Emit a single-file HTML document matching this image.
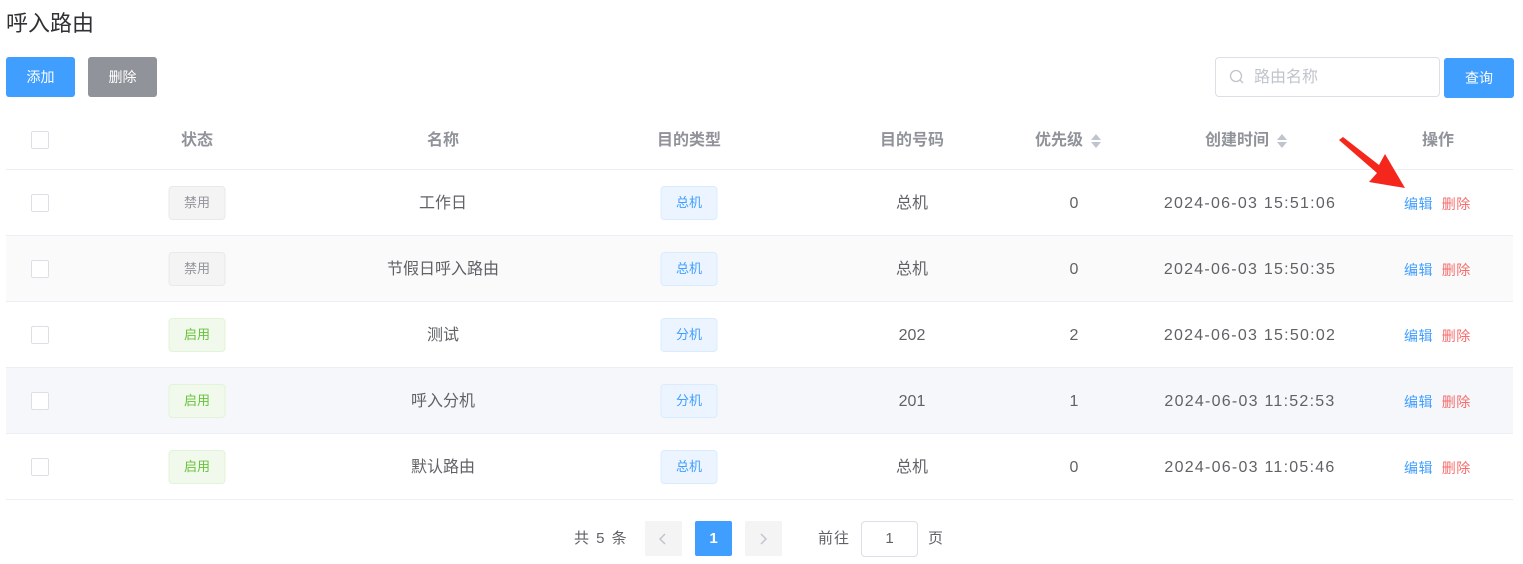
<!DOCTYPE html>
<html><head><meta charset="utf-8"><style>
*{margin:0;padding:0;box-sizing:border-box}
body{width:1523px;height:564px;background:#fff;font-family:"Liberation Sans","Noto Sans CJK SC",sans-serif;position:relative;overflow:hidden;color:#606266}
.a{position:absolute}
.btn{position:absolute;color:#fff;font-size:14px;border-radius:3px;text-align:center;line-height:40px;height:40px}
.row{position:absolute;left:6px;width:1507px;height:66px;border-bottom:1px solid #ebeef5}
.c{position:absolute;top:1px;height:66px;line-height:66px;font-size:16px;color:#606266;text-align:center;transform:translateX(-50%);white-space:nowrap}
.d{letter-spacing:1.25px}
.cb{position:absolute;left:25px;top:24px;width:18px;height:18px;border:1px solid #dcdfe6;border-radius:2px;background:#fff}
.tag{position:absolute;top:16px;height:34px;line-height:32px;width:57px;font-size:13px;text-align:center;border-radius:4px;border:1px solid;transform:translateX(-50%)}
.off{background:#f4f4f5;border-color:#e9e9eb;color:#909399}
.on{background:#f0f9eb;border-color:#e1f3d8;color:#67c23a}
.bl{background:#ecf5ff;border-color:#d9ecff;color:#409eff}
.h{position:absolute;top:111px;height:60px;line-height:60px;font-size:16px;font-weight:bold;color:#909399;transform:translateX(-50%);white-space:nowrap}
.ops{position:absolute;left:1398px;top:1px;line-height:66px;font-size:14px;letter-spacing:0.5px}
.sort{display:inline-block;vertical-align:middle;margin-left:8px;width:10px;height:16px;position:relative}
.sort:before{content:"";position:absolute;top:1px;left:0;border:5px solid transparent;border-bottom:6px solid #c0c4cc;border-top:0}
.sort:after{content:"";position:absolute;bottom:1px;left:0;border:5px solid transparent;border-top:6px solid #c0c4cc;border-bottom:0}
</style></head><body>
<div class="a" style="left:6px;top:8px;font-size:22px;color:#303133;line-height:32px">呼入路由</div>
<div class="btn" style="left:6px;top:57px;width:69px;background:#409eff">添加</div>
<div class="btn" style="left:88px;top:57px;width:69px;background:#909399">删除</div>
<div class="a" style="left:1215px;top:57px;width:225px;height:40px;border:1px solid #dcdfe6;border-radius:4px">
<svg class="a" style="left:13px;top:11px" width="16" height="16" viewBox="0 0 16 16"><circle cx="7" cy="7" r="5.5" fill="none" stroke="#c0c4cc" stroke-width="1.3"/><path d="M11 11l3 3" stroke="#c0c4cc" stroke-width="1.3"/></svg>
<div class="a" style="left:38px;top:1px;line-height:38px;font-size:16px;color:#c0c4cc">路由名称</div></div>
<div class="btn" style="left:1444px;top:58px;width:70px;background:#409eff">查询</div>

<div class="a" style="left:6px;top:169px;width:1507px;height:1px;background:#ebeef5"></div>
<div class="cb" style="left:31px;top:131px"></div>
<div class="h" style="left:197px">状态</div>
<div class="h" style="left:443px">名称</div>
<div class="h" style="left:689px">目的类型</div>
<div class="h" style="left:912px">目的号码</div>
<div class="h" style="left:1068px">优先级<span class="sort"></span></div>
<div class="h" style="left:1246px">创建时间<span class="sort"></span></div>
<div class="h" style="left:1438px">操作</div>

<div class="row" style="top:170px"><div class="cb"></div><div class="tag off" style="left:191px">禁用</div><div class="c" style="left:437px">工作日</div><div class="tag bl" style="left:683px">总机</div><div class="c" style="left:906px">总机</div><div class="c" style="left:1068px">0</div><div class="c d" style="left:1244px">2024-06-03 15:51:06</div><div class="ops"><span style="color:#409eff">编辑</span>&nbsp;&nbsp;<span style="color:#f56c6c">删除</span></div></div>
<div class="row" style="top:236px;background:#fafafa"><div class="cb"></div><div class="tag off" style="left:191px">禁用</div><div class="c" style="left:437px">节假日呼入路由</div><div class="tag bl" style="left:683px">总机</div><div class="c" style="left:906px">总机</div><div class="c" style="left:1068px">0</div><div class="c d" style="left:1244px">2024-06-03 15:50:35</div><div class="ops"><span style="color:#409eff">编辑</span>&nbsp;&nbsp;<span style="color:#f56c6c">删除</span></div></div>
<div class="row" style="top:302px"><div class="cb"></div><div class="tag on" style="left:191px">启用</div><div class="c" style="left:437px">测试</div><div class="tag bl" style="left:683px">分机</div><div class="c" style="left:906px">202</div><div class="c" style="left:1068px">2</div><div class="c d" style="left:1244px">2024-06-03 15:50:02</div><div class="ops"><span style="color:#409eff">编辑</span>&nbsp;&nbsp;<span style="color:#f56c6c">删除</span></div></div>
<div class="row" style="top:368px;background:#f5f7fa"><div class="cb"></div><div class="tag on" style="left:191px">启用</div><div class="c" style="left:437px">呼入分机</div><div class="tag bl" style="left:683px">分机</div><div class="c" style="left:906px">201</div><div class="c" style="left:1068px">1</div><div class="c d" style="left:1244px">2024-06-03 11:52:53</div><div class="ops"><span style="color:#409eff">编辑</span>&nbsp;&nbsp;<span style="color:#f56c6c">删除</span></div></div>
<div class="row" style="top:434px"><div class="cb"></div><div class="tag on" style="left:191px">启用</div><div class="c" style="left:437px">默认路由</div><div class="tag bl" style="left:683px">总机</div><div class="c" style="left:906px">总机</div><div class="c" style="left:1068px">0</div><div class="c d" style="left:1244px">2024-06-03 11:05:46</div><div class="ops"><span style="color:#409eff">编辑</span>&nbsp;&nbsp;<span style="color:#f56c6c">删除</span></div></div>

<svg class="a" style="left:1335px;top:135px" width="80" height="60" viewBox="0 0 80 60"><polygon points="4,5 8,2 44,30 50,19 70,53 34,47 42,38" fill="#f5261b"/></svg>

<div class="a" style="left:574px;top:520px;line-height:38px;font-size:15px;color:#606266;letter-spacing:1.5px">共 5 条</div>
<div class="a" style="left:645px;top:521px;width:37px;height:35px;background:#f4f4f5;border-radius:2px"><svg class="a" style="left:13px;top:11px" width="10" height="14"><path d="M7 2L2 7l5 5" fill="none" stroke="#c0c4cc" stroke-width="1.5"/></svg></div>
<div class="a" style="left:695px;top:521px;width:37px;height:35px;background:#409eff;border-radius:2px;color:#fff;font-weight:bold;font-size:15px;text-align:center;line-height:35px">1</div>
<div class="a" style="left:745px;top:521px;width:37px;height:35px;background:#f4f4f5;border-radius:2px"><svg class="a" style="left:14px;top:11px" width="10" height="14"><path d="M2 2l5 5-5 5" fill="none" stroke="#c0c4cc" stroke-width="1.5"/></svg></div>
<div class="a" style="left:818px;top:520px;line-height:38px;font-size:15px;letter-spacing:1px">前往</div>
<div class="a" style="left:861px;top:521px;width:57px;height:36px;border:1px solid #dcdfe6;border-radius:4px;text-align:center;line-height:34px;font-size:15px">1</div>
<div class="a" style="left:928px;top:520px;line-height:38px;font-size:15px">页</div>
</body></html>
